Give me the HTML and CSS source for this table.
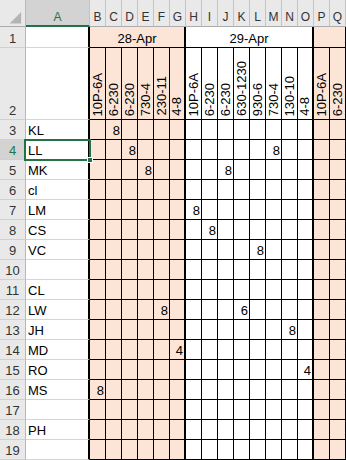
FILE: index.html
```html
<!DOCTYPE html>
<html>
<head>
<meta charset="utf-8">
<link rel="stylesheet" href="styles.css">
</head>
<body>
<div class="sheet">
  <div class="hr">
    <div class="corner"><svg width="26" height="26" viewBox="0 0 26 26"><polygon points="10,24 22,24 22,12" fill="#b4b4b4"/></svg></div>
    <div class="ch sel">A</div>
    <div class="ch">B</div><div class="ch">C</div><div class="ch">D</div><div class="ch">E</div><div class="ch">F</div><div class="ch">G</div><div class="ch">H</div><div class="ch">I</div><div class="ch">J</div><div class="ch">K</div><div class="ch">L</div><div class="ch">M</div><div class="ch">N</div><div class="ch">O</div><div class="ch">P</div><div class="ch">Q</div>
  </div>

  <div class="r r1">
    <div class="rh">1</div><div class="nm"></div>
    <div class="m p s6">28-Apr</div>
    <div class="m s8">29-Apr</div>
    <div class="m p s2 last"></div>
  </div>

  <div class="r r2 d">
    <div class="rh">2</div><div class="nm"></div>
    <div><span class="v">10P-6A</span></div>
    <div><span class="v">6-230</span></div>
    <div><span class="v">6-230</span></div>
    <div><span class="v">730-4</span></div>
    <div><span class="v">230-11</span></div>
    <div><span class="v">4-8</span></div>
    <div><span class="v">10P-6A</span></div>
    <div><span class="v">6-230</span></div>
    <div><span class="v">6-230</span></div>
    <div><span class="v">630-1230</span></div>
    <div><span class="v">930-6</span></div>
    <div><span class="v">730-4</span></div>
    <div><span class="v">130-10</span></div>
    <div><span class="v">4-8</span></div>
    <div><span class="v">10P-6A</span></div>
    <div><span class="v">6-230</span></div>
  </div>

  <div class="r d"><div class="rh">3</div><div class="nm">KL</div><div></div><div>8</div><div></div><div></div><div></div><div></div><div></div><div></div><div></div><div></div><div></div><div></div><div></div><div></div><div></div><div></div></div>

  <div class="r d"><div class="rh sel">4</div><div class="nm cur">LL<i class="selbox"></i><i class="handle"></i></div><div></div><div></div><div>8</div><div></div><div></div><div></div><div></div><div></div><div></div><div></div><div></div><div>8</div><div></div><div></div><div></div><div></div></div>

  <div class="r d"><div class="rh">5</div><div class="nm">MK</div><div></div><div></div><div></div><div>8</div><div></div><div></div><div></div><div></div><div>8</div><div></div><div></div><div></div><div></div><div></div><div></div><div></div></div>

  <div class="r d"><div class="rh">6</div><div class="nm">cl</div><div></div><div></div><div></div><div></div><div></div><div></div><div></div><div></div><div></div><div></div><div></div><div></div><div></div><div></div><div></div><div></div></div>

  <div class="r d"><div class="rh">7</div><div class="nm">LM</div><div></div><div></div><div></div><div></div><div></div><div></div><div>8</div><div></div><div></div><div></div><div></div><div></div><div></div><div></div><div></div><div></div></div>

  <div class="r d"><div class="rh">8</div><div class="nm">CS</div><div></div><div></div><div></div><div></div><div></div><div></div><div></div><div>8</div><div></div><div></div><div></div><div></div><div></div><div></div><div></div><div></div></div>

  <div class="r d"><div class="rh">9</div><div class="nm">VC</div><div></div><div></div><div></div><div></div><div></div><div></div><div></div><div></div><div></div><div></div><div>8</div><div></div><div></div><div></div><div></div><div></div></div>

  <div class="r d"><div class="rh">10</div><div class="nm"></div><div></div><div></div><div></div><div></div><div></div><div></div><div></div><div></div><div></div><div></div><div></div><div></div><div></div><div></div><div></div><div></div></div>

  <div class="r d"><div class="rh">11</div><div class="nm">CL</div><div></div><div></div><div></div><div></div><div></div><div></div><div></div><div></div><div></div><div></div><div></div><div></div><div></div><div></div><div></div><div></div></div>

  <div class="r d"><div class="rh">12</div><div class="nm">LW</div><div></div><div></div><div></div><div></div><div>8</div><div></div><div></div><div></div><div></div><div>6</div><div></div><div></div><div></div><div></div><div></div><div></div></div>

  <div class="r d"><div class="rh">13</div><div class="nm">JH</div><div></div><div></div><div></div><div></div><div></div><div></div><div></div><div></div><div></div><div></div><div></div><div></div><div>8</div><div></div><div></div><div></div></div>

  <div class="r d"><div class="rh">14</div><div class="nm">MD</div><div></div><div></div><div></div><div></div><div></div><div>4</div><div></div><div></div><div></div><div></div><div></div><div></div><div></div><div></div><div></div><div></div></div>

  <div class="r d"><div class="rh">15</div><div class="nm">RO</div><div></div><div></div><div></div><div></div><div></div><div></div><div></div><div></div><div></div><div></div><div></div><div></div><div></div><div>4</div><div></div><div></div></div>

  <div class="r d"><div class="rh">16</div><div class="nm">MS</div><div>8</div><div></div><div></div><div></div><div></div><div></div><div></div><div></div><div></div><div></div><div></div><div></div><div></div><div></div><div></div><div></div></div>

  <div class="r d"><div class="rh">17</div><div class="nm"></div><div></div><div></div><div></div><div></div><div></div><div></div><div></div><div></div><div></div><div></div><div></div><div></div><div></div><div></div><div></div><div></div></div>

  <div class="r d"><div class="rh">18</div><div class="nm">PH</div><div></div><div></div><div></div><div></div><div></div><div></div><div></div><div></div><div></div><div></div><div></div><div></div><div></div><div></div><div></div><div></div></div>

  <div class="r d"><div class="rh">19</div><div class="nm"></div><div></div><div></div><div></div><div></div><div></div><div></div><div></div><div></div><div></div><div></div><div></div><div></div><div></div><div></div><div></div><div></div></div>
</div>
</body>
</html>
```

FILE: styles.css
```css
* {
  box-sizing: border-box;
  margin: 0;
  padding: 0;
}

body {
  margin: 0;
  background: #fff;
  color: #000;
  font-family: "Liberation Sans", Arial, sans-serif;
  font-size: 13px;
}

.sheet {
  width: 346px;
}

/* column header bar */
.hr {
  display: grid;
  grid-template-columns: 26px 64px repeat(16, 16px);
  height: 27px;
}

.hr > div {
  display: flex;
  align-items: flex-end;
  justify-content: center;
  background: #e9e9e9;
  border-right: 1px solid #c4c4c4;
  border-bottom: 1px solid #ababab;
  font-size: 12px;
  line-height: 14px;
  padding-bottom: 2px;
  color: #333;
}

.hr > .corner {
  padding: 0;
  align-items: flex-start;
  justify-content: flex-start;
  border-right-color: #b8b8b8;
}

.hr > .ch.sel {
  background: #d3d3d3;
  color: #217346;
  border-bottom: 2px solid #217346;
  padding-bottom: 1px;
}

/* sheet rows */
.r {
  display: grid;
  grid-template-columns: 26px 64px repeat(16, 16px);
  height: 20px;
}

.r > div {
  display: flex;
  align-items: flex-end;
  line-height: 16px;
}

.r > .rh {
  justify-content: center;
  background: #e9e9e9;
  border-right: 1px solid #b8b8b8;
  border-bottom: 1px solid #d0d0d0;
  color: #333;
}

.r > .rh.sel {
  background: #d3d3d3;
  color: #217346;
}

.r > .nm {
  position: relative;
  padding-left: 2px;
  border-right: 2px solid #000;
  border-bottom: 1px solid #d4d4d4;
}

.d > div:nth-child(n+3) {
  justify-content: flex-end;
  padding-right: 1px;
  border-right: 1px solid #000;
  border-bottom: 1px solid #000;
  background: #fff;
}

.d > div:nth-child(n+3):nth-child(-n+8),
.d > div:nth-child(n+17) {
  background: #fce4d6;
}

.d > div:nth-child(8),
.d > div:nth-child(16) {
  border-right-width: 2px;
}

/* date row */
.r1 {
  height: 21px;
}

.r1 > .m {
  justify-content: center;
  border-right: 2px solid #000;
  border-bottom: 1px solid #000;
  background: #fff;
}

.r1 > .m.p {
  background: #fce4d6;
}

.r1 > .m.last {
  border-right-width: 1px;
}

.s6 { grid-column: span 6; }
.s8 { grid-column: span 8; }
.s2 { grid-column: span 2; }

/* shift label row */
.r2 {
  height: 72px;
}

.r2 > div:nth-child(n+3) {
  justify-content: center;
  padding-right: 0;
}

.v {
  display: block;
  writing-mode: vertical-rl;
  transform: rotate(180deg);
  line-height: 16px;
  margin-bottom: 3px;
  white-space: nowrap;
}

/* active cell */
.selbox {
  position: absolute;
  left: -2px;
  top: -1px;
  width: 67px;
  height: 22px;
  border: 2px solid #217346;
  pointer-events: none;
}

.handle {
  position: absolute;
  left: 61px;
  top: 17px;
  width: 6px;
  height: 6px;
  background: #217346;
  border: 1px solid #fff;
  z-index: 2;
}
```
